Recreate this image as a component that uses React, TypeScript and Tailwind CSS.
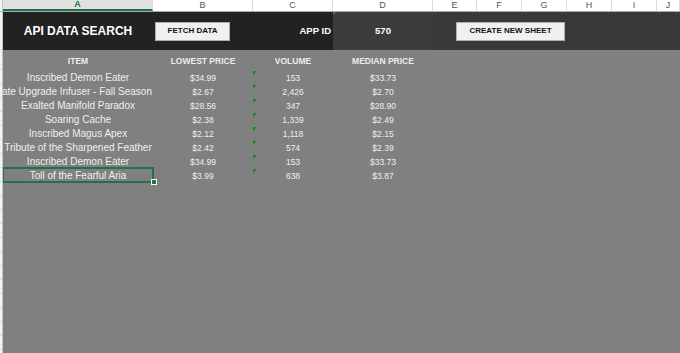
const cols = ["A", "B", "C", "D", "E", "F", "G", "H", "I", "J"];
const colWidths = ["w-[150px]", "w-[100px]", "w-[80px]", "w-[100px]", "w-[44px]", "w-[45px]", "w-[45px]", "w-[45px]", "w-[45px]", "flex-1"];

// wide names are clipped by the neighbouring cell, like in the sheet
const rows = [
  { item: "Inscribed Demon Eater", low: "$34.99", vol: "153", median: "$33.73" },
  { item: "Ultimate Upgrade Infuser - Fall Season", low: "$2.67", vol: "2,426", median: "$2.70", clip: true },
  { item: "Exalted Manifold Paradox", low: "$28.56", vol: "347", median: "$28.90" },
  { item: "Soaring Cache", low: "$2.38", vol: "1,339", median: "$2.49" },
  { item: "Inscribed Magus Apex", low: "$2.12", vol: "1,118", median: "$2.15" },
  { item: "Tribute of the Sharpened Feather", low: "$2.42", vol: "574", median: "$2.39" },
  { item: "Inscribed Demon Eater", low: "$34.99", vol: "153", median: "$33.73" },
  { item: "Toll of the Fearful Aria", low: "$3.99", vol: "638", median: "$3.87" },
];

const ExcelButton = ({ label, width }: { label: string; width: string }) => (
  <div
    className={`${width} h-[19px] flex items-center justify-center bg-[#f0f0f0] border border-[#adadad] text-[8px] font-bold text-[#111]`}
  >
    {label}
  </div>
);

export default function App() {
  return (
    <div className="w-[680px] h-[353px] overflow-hidden bg-[#808080] font-['Liberation_Sans',Arial,sans-serif] flex flex-col">
      {/* column letters */}
      <div className="flex h-[12px] bg-white border-b border-[#ababab] shrink-0">
        <div className="w-[3px] bg-[#f3f3f3] border-r border-[#c6c6c6]" />
        {cols.map((c, i) => (
          <div
            key={c}
            className={`${colWidths[i]} flex items-center justify-center text-[9px] border-r border-[#dadada] ${
              i === 0 ? "bg-[#e1e1e1] text-[#217346] font-bold border-b-2 border-b-[#217346]" : "text-[#555]"
            }`}
          >
            {c}
          </div>
        ))}
      </div>

      <div className="flex flex-1">
        {/* row numbers strip */}
        <div className="w-[3px] bg-[#f3f3f3] border-r border-[#c6c6c6] flex flex-col">
          <div className="h-[38px] border-b border-[#dadada]" />
          <div className="h-[20px] border-b border-[#dadada]" />
          {Array.from({ length: 20 }).map((_, i) => (
            <div key={i} className="h-[14px] border-b border-[#dadada] shrink-0" />
          ))}
        </div>

        <div className="flex-1 flex flex-col overflow-hidden">
          {/* banner */}
          <div className="flex h-[38px] shrink-0">
            <div className="w-[330px] bg-[#222222] flex items-center">
              <div className="w-[150px] text-center text-white font-bold text-[12px]">API DATA SEARCH</div>
              <div className="w-[100px] pl-[2px]">
                <ExcelButton label="FETCH DATA" width="w-[75px]" />
              </div>
              <div className="w-[80px] text-right pr-[2px] text-white font-bold text-[9.5px]">APP ID</div>
            </div>
            <div className="relative w-[100px] bg-[#3c3c3c] flex items-center justify-center text-white font-bold text-[9.5px]">
              <span className="absolute left-0 top-0 w-0 h-0 border-t-[3px] border-r-[3px] border-t-[#1f8a1f] border-r-transparent" />
              570
            </div>
            <div className="flex-1 bg-[#393939] flex items-center pl-[23px]">
              <ExcelButton label="CREATE NEW SHEET" width="w-[109px]" />
            </div>
          </div>

          {/* table header */}
          <div className="flex h-[20px] items-end pb-[2px] text-[8.5px] font-bold text-[#ececec] shrink-0">
            <div className="w-[150px] text-center">ITEM</div>
            <div className="w-[100px] text-center">LOWEST PRICE</div>
            <div className="w-[80px] text-center">VOLUME</div>
            <div className="w-[100px] text-center">MEDIAN PRICE</div>
          </div>

          {rows.map((r, i) => {
            const selected = i === rows.length - 1;
            return (
              <div key={i} className="flex h-[14px] shrink-0 text-[#efefef]">
                <div
                  className={`relative w-[150px] flex items-end whitespace-nowrap text-[10px] leading-[13px] ${
                    r.clip ? "justify-end pr-[1px]" : "justify-center"
                  } ${selected ? "" : "overflow-hidden"}`}
                >
                  <span className="shrink-0">{r.item}</span>
                  {selected && (
                    <>
                      <span className="absolute inset-[-1px] border-2 border-[#217346]" />
                      <span className="absolute right-[-4px] bottom-[-3px] w-[6px] h-[6px] bg-[#217346] border border-white" />
                    </>
                  )}
                </div>
                <div className="w-[100px] flex items-end justify-center text-[8.5px] leading-[12px]">{r.low}</div>
                <div className="relative w-[80px] flex items-end justify-center text-[8.5px] leading-[12px]">
                  <span className="absolute left-0 top-[1px] w-0 h-0 border-t-[4px] border-r-[4px] border-t-[#1a8a1a] border-r-transparent" />
                  {r.vol}
                </div>
                <div className="w-[100px] flex items-end justify-center text-[8.5px] leading-[12px]">{r.median}</div>
              </div>
            );
          })}
        </div>
      </div>
    </div>
  );
}
